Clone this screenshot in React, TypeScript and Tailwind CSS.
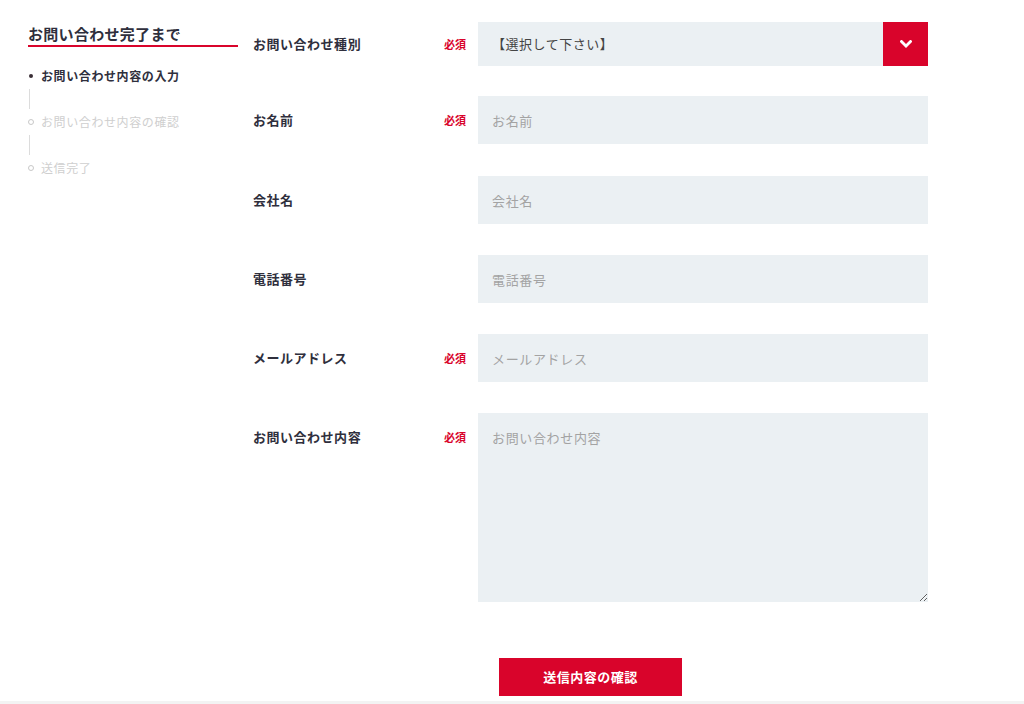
import React from 'react';

const fields = [
    { label: 'お名前', required: true, placeholder: 'お名前' },
    { label: '会社名', required: false, placeholder: '会社名' },
    { label: '電話番号', required: false, placeholder: '電話番号' },
    { label: 'メールアドレス', required: true, placeholder: 'メールアドレス' },
];

const Required: React.FC = () => (
    <span className="text-[11px] font-bold text-[#d9042b] leading-none">必須</span>
);

const Label: React.FC<{ text: string; required?: boolean; h: string }> = ({ text, required, h }) => (
    <div className={`w-[225px] shrink-0 flex items-center justify-between pr-[12px] ${h}`}>
        <span className="text-[13px] font-bold text-[#2f2f3d] tracking-[0.04em]">{text}</span>
        {required && <Required />}
    </div>
);

export default function App() {
    return (
        <div className="min-h-[704px] bg-white font-['Noto_Sans_CJK_JP','Noto_Sans',sans-serif] flex flex-col">
            <div className="flex pt-[22px] pl-[28px]">
                {/* sidebar */}
                <aside className="w-[210px] shrink-0">
                    <h2 className="text-[15px] leading-[20px] font-bold text-[#2f2f3d] tracking-[0.02em] pt-[2px] pb-[1px] border-b-2 border-[#d9042b]">
                        お問い合わせ完了まで
                    </h2>
                    <ul className="mt-[21px] text-[12px] leading-[16px] font-bold tracking-[0.05em]">
                        <li className="flex items-center text-[#2f2f3d]">
                            <span className="w-[13px] flex">
                                <span className="ml-[1px] w-[4px] h-[4px] rounded-full bg-[#3a2f36]"></span>
                            </span>
                            お問い合わせ内容の入力
                        </li>
                        <li className="ml-[1px] my-[5px] w-px h-[20px] bg-[#dcdcdc]"></li>
                        <li className="flex items-center text-[#cfcfcf] font-normal">
                            <span className="w-[13px] flex">
                                <span className="w-[6px] h-[6px] rounded-full border border-[#c8c8c8]"></span>
                            </span>
                            お問い合わせ内容の確認
                        </li>
                        <li className="ml-[1px] my-[5px] w-px h-[20px] bg-[#dcdcdc]"></li>
                        <li className="flex items-center text-[#cfcfcf] font-normal">
                            <span className="w-[13px] flex">
                                <span className="w-[6px] h-[6px] rounded-full border border-[#c8c8c8]"></span>
                            </span>
                            送信完了
                        </li>
                    </ul>
                </aside>

                {/* form */}
                <form className="ml-[15px] w-[675px] flex flex-col">
                    <div className="flex mb-[30px]">
                        <Label text="お問い合わせ種別" required h="h-[44px]" />
                        <div className="w-[450px] h-[44px] flex bg-[#ebf0f3]">
                            <div className="flex-1 flex items-center pl-[14px] text-[13px] text-[#444] tracking-[0.04em]">
                                【選択して下さい】
                            </div>
                            <div className="w-[45px] h-full bg-[#d9042b] flex items-center justify-center">
                                <svg width="12" height="8" viewBox="0 0 12 8" fill="none">
                                    <path d="M1.5 1.5 L6 6 L10.5 1.5" stroke="white" strokeWidth="2.8" strokeLinecap="square" />
                                </svg>
                            </div>
                        </div>
                    </div>

                    {fields.map((f, i) => (
                        <div key={f.label} className={`flex ${i === 0 ? 'mb-[32px]' : 'mb-[31px]'}`}>
                            <Label text={f.label} required={f.required} h="h-[48px]" />
                            <input
                                type="text"
                                placeholder={f.placeholder}
                                className="w-[450px] h-[48px] bg-[#ebf0f3] px-[14px] text-[13px] tracking-[0.05em] text-[#333] placeholder-[#a3a3a3] outline-none"
                            />
                        </div>
                    ))}

                    <div className="flex">
                        <Label text="お問い合わせ内容" required h="h-[48px]" />
                        <textarea
                            placeholder="お問い合わせ内容"
                            className="w-[450px] h-[189px] bg-[#ebf0f3] px-[14px] py-[15px] text-[13px] tracking-[0.05em] text-[#333] placeholder-[#a3a3a3] outline-none"
                        />
                    </div>

                    <div className="flex justify-center mt-[56px]">
                        <button
                            type="button"
                            className="w-[183px] h-[38px] bg-[#d9042b] text-white text-[13px] font-bold tracking-[0.04em]"
                        >
                            送信内容の確認
                        </button>
                    </div>
                </form>
            </div>
            <div className="mt-[5px] flex-1 min-h-[20px] bg-[#f3f3f3]"></div>
        </div>
    );
}
